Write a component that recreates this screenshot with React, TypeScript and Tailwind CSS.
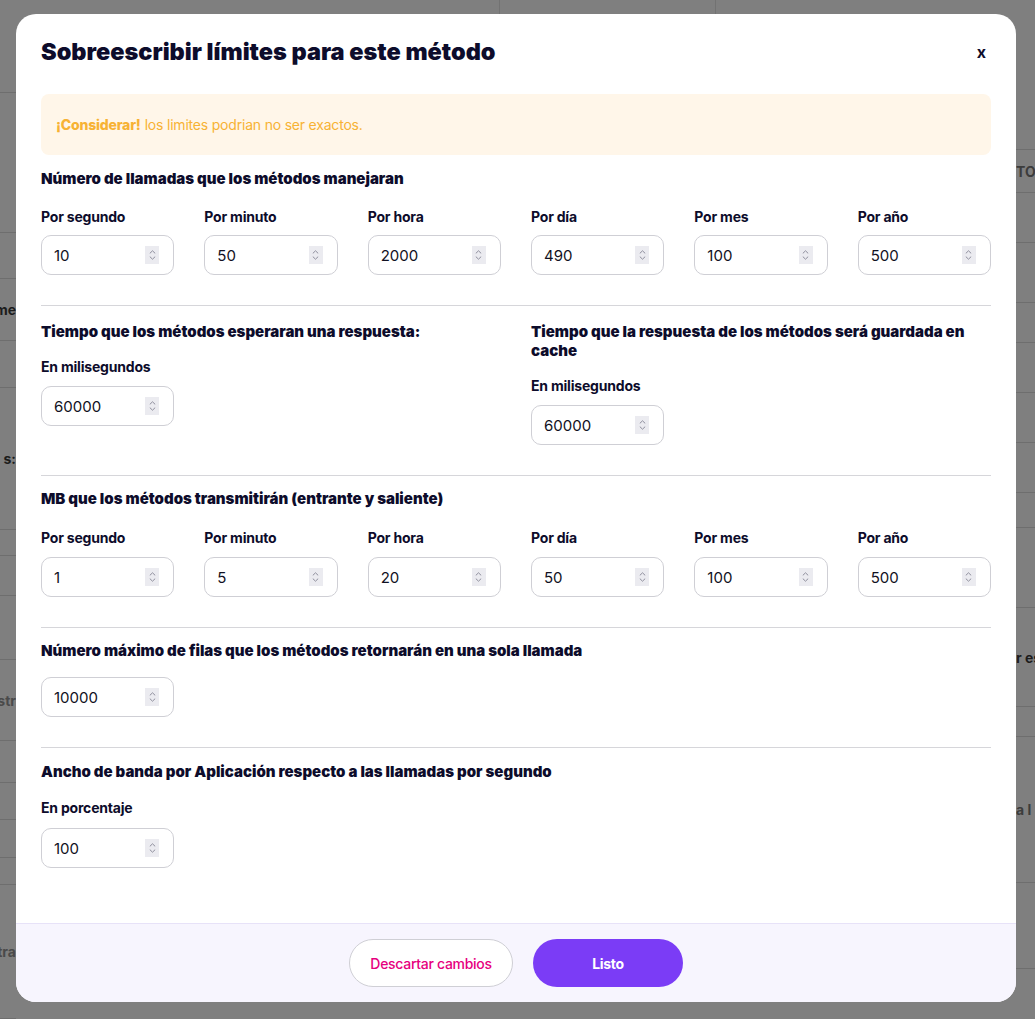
import React from "react";

const navy = "text-[#0d0c2b]";

function Spinner() {
  return (
    <span className="flex h-[18px] w-[14px] flex-col items-center justify-center gap-[2px] bg-[#ebebf0]">
      <svg width="7" height="4" viewBox="0 0 7 4" fill="none">
        <path d="M0.8 3.4 L3.5 0.8 L6.2 3.4" stroke="#8e8e9c" strokeWidth="1" />
      </svg>
      <svg width="7" height="4" viewBox="0 0 7 4" fill="none">
        <path d="M0.8 0.6 L3.5 3.2 L6.2 0.6" stroke="#8e8e9c" strokeWidth="1" />
      </svg>
    </span>
  );
}

function NumInput({ value, fixed }: { value: string; fixed?: boolean }) {
  return (
    <div
      className={
        "flex h-[40px] items-center justify-between rounded-[10px] border border-[#cfcfd5] bg-white pl-[12px] pr-[14px] " +
        (fixed ? "w-[133px]" : "w-full")
      }
    >
      <span className="text-[15px] leading-none text-[#111122]">{value}</span>
      <Spinner />
    </div>
  );
}

function Label({ children }: { children: React.ReactNode }) {
  return (
    <div className={"text-[14px] font-bold leading-[20px] tracking-[-0.2px] " + navy}>{children}</div>
  );
}

function Heading({ children }: { children: React.ReactNode }) {
  return (
    <div className={"text-[15px] font-black leading-[19px] " + navy}>{children}</div>
  );
}

function SixGrid({ values, gap }: { values: string[]; gap: string }) {
  const labels = ["Por segundo", "Por minuto", "Por hora", "Por día", "Por mes", "Por año"];
  return (
    <div className="grid grid-cols-6 gap-x-[30px]">
      {labels.map((l, i) => (
        <div key={l} className={"flex flex-col " + gap}>
          <Label>{l}</Label>
          <NumInput value={values[i]} />
        </div>
      ))}
    </div>
  );
}

type Row = { h: number; text?: string; tone?: string };

const leftRows: Row[] = [
  { h: 93 },
  { h: 140 },
  { h: 46 },
  { h: 62, text: "me", tone: "text-[#1c1c1c]" },
  { h: 47 },
  { h: 142, text: "s:", tone: "text-[#1c1c1c]" },
  { h: 26 },
  { h: 40 },
  { h: 64 },
  { h: 81, text: "ostr", tone: "text-[#4a4a4a]" },
  { h: 42 },
  { h: 37 },
  { h: 38 },
  { h: 27 },
  { h: 134, text: "ostra", tone: "text-[#4a4a4a]" },
];

const rightRows: Row[] = [
  { h: 150 },
  { h: 43, text: "TO", tone: "text-[#3c3c3c]" },
  { h: 50 },
  { h: 60 },
  { h: 40 },
  { h: 50 },
  { h: 50 },
  { h: 50 },
  { h: 35 },
  { h: 80 },
  { h: 99, text: "r es", tone: "text-[#1c1c1c]" },
  { h: 30 },
  { h: 146, text: "a l", tone: "text-[#3c3c3c]" },
  { h: 86 },
];

function Strip({ rows, align }: { rows: Row[]; align: "end" | "start" }) {
  return (
    <div className="flex flex-col overflow-hidden">
      {rows.map((r, i) => (
        <div
          key={i}
          style={{ height: r.h }}
          className={
            "flex shrink-0 items-center border-b border-[#6e6e6e] text-[14px] font-bold whitespace-nowrap " +
            (align === "end" ? "justify-end " : "justify-start ") +
            (r.tone ?? "")
          }
        >
          {r.text}
        </div>
      ))}
    </div>
  );
}

export default function App() {
  return (
    <div className="relative h-[1019px] w-full overflow-hidden bg-[#7f7f7f] font-['Inter',sans-serif]">
      {/* page behind the overlay */}
      <div className="grid h-full grid-cols-[16px_1fr_19px]">
        <Strip rows={leftRows} align="end" />
        <div className="flex">
          <div className="h-[14px] w-[484px] border-r border-[#727272]" />
          <div className="h-[14px] w-[216px] border-r border-[#727272]" />
        </div>
        <Strip rows={rightRows} align="start" />
      </div>

      {/* modal */}
      <div className="absolute left-[16px] top-[14px] flex h-[988px] w-[1000px] flex-col overflow-hidden rounded-[20px] bg-white">
        <div className="flex flex-1 flex-col px-[25px] pt-[24px]">
          <div className="flex items-center justify-between">
            <h1 className={"text-[23.5px] font-black leading-[28px] tracking-[0px] " + navy}>
              Sobreescribir límites para este método
            </h1>
            <span className={"mr-[5px] text-[16px] font-bold leading-none " + navy}>x</span>
          </div>

          <div className="mt-[28px] flex h-[61px] items-center rounded-[8px] bg-[#fff6e9] px-[15px] text-[14px] tracking-[-0.2px] text-[#f7b234]">
            <span className="font-extrabold">¡Considerar!</span>
            <span className="ml-[4px]">los limites podrian no ser exactos.</span>
          </div>

          {/* section 1 */}
          <div className="border-b border-[#d6d6da] pb-[30px] pt-[14px]">
            <div className="mb-[19px]">
              <Heading>Número de llamadas que los métodos manejaran</Heading>
            </div>
            <SixGrid values={["10", "50", "2000", "490", "100", "500"]} gap="gap-[8px]" />
          </div>

          {/* section 2 */}
          <div className="grid grid-cols-2 gap-x-[30px] border-b border-[#d6d6da] pb-[30px] pt-[16px]">
            <div className="flex flex-col">
              <Heading>Tiempo que los métodos esperaran una respuesta:</Heading>
              <div className="mt-[16px] flex flex-col gap-[9px]">
                <Label>En milisegundos</Label>
                <NumInput value="60000" fixed />
              </div>
            </div>
            <div className="flex flex-col">
              <div className="pr-[10px]">
                <Heading>Tiempo que la respuesta de los métodos será guardada en cache</Heading>
              </div>
              <div className="mt-[16px] flex flex-col gap-[9px]">
                <Label>En milisegundos</Label>
                <NumInput value="60000" fixed />
              </div>
            </div>
          </div>

          {/* section 3 */}
          <div className="border-b border-[#d6d6da] pb-[30px] pt-[13px]">
            <div className="mb-[20px]">
              <Heading>MB que los métodos transmitirán (entrante y saliente)</Heading>
            </div>
            <SixGrid values={["1", "5", "20", "50", "100", "500"]} gap="gap-[9px]" />
          </div>

          {/* section 4 */}
          <div className="border-b border-[#d6d6da] pb-[30px] pt-[13px]">
            <div className="mb-[17px]">
              <Heading>Número máximo de filas que los métodos retornarán en una sola llamada</Heading>
            </div>
            <NumInput value="10000" fixed />
          </div>

          {/* section 5 */}
          <div className="pt-[14px]">
            <div className="mb-[17px]">
              <Heading>Ancho de banda por Aplicación respecto a las llamadas por segundo</Heading>
            </div>
            <div className="flex flex-col gap-[10px]">
              <Label>En porcentaje</Label>
              <NumInput value="100" fixed />
            </div>
          </div>
        </div>

        {/* footer */}
        <div className="flex h-[79px] items-center justify-center gap-[20px] border-t border-[#e7e2f8] bg-[#f7f5fe]">
          <button className="h-[48px] w-[164px] rounded-full border border-[#cfcfd5] bg-white text-[14px] font-medium tracking-[-0.3px] text-[#e6007e]">
            Descartar cambios
          </button>
          <button className="h-[48px] w-[150px] rounded-full bg-[#7b3cf6] text-[14px] font-bold tracking-[-0.3px] text-white">
            Listo
          </button>
        </div>
      </div>
    </div>
  );
}
